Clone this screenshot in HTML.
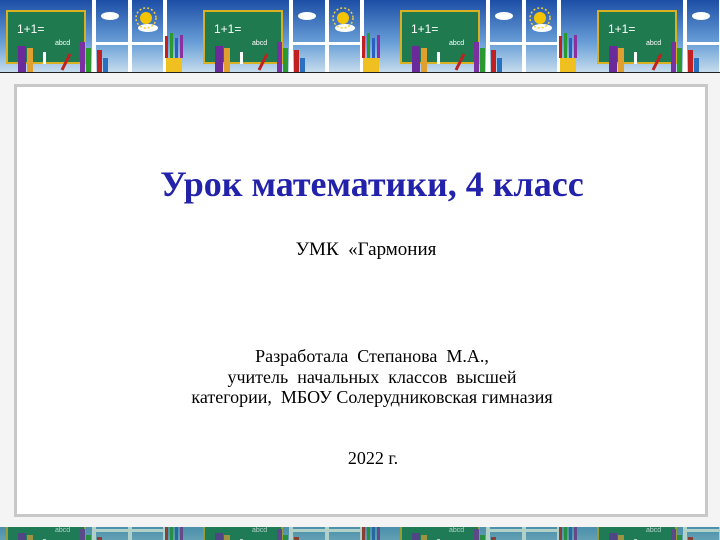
<!DOCTYPE html>
<html><head><meta charset="utf-8"><style>
body{margin:0;width:720px;height:540px;overflow:hidden;background:#fff;font-family:"Liberation Serif",serif;position:relative}
svg.band{position:absolute;left:0}
#outer{position:absolute;left:0;top:72px;width:720px;height:455px;background:#f4f4f4;border-top:1px solid #222}
#panel{position:absolute;left:14px;top:84px;width:688px;height:427px;background:#fff;border:3px solid #c8c8c8;box-sizing:content-box}
.t{position:absolute;left:0;width:720px;text-align:center;color:#000;white-space:pre}
</style></head><body>
<svg class="band" style="top:0" width="720" height="72" viewBox="0 0 720 72">
<defs>
<linearGradient id="sky" x1="0" y1="0" x2="0" y2="1"><stop offset="0" stop-color="#1c4ea6"/><stop offset="0.6" stop-color="#6aa0d8"/><stop offset="1" stop-color="#c6dced"/></linearGradient>
<pattern id="tile" width="197" height="72" patternUnits="userSpaceOnUse" x="0">
<rect width="197" height="72" fill="url(#sky)"/>
<rect x="92" y="0" width="4" height="72" fill="#fff"/><rect x="128" y="0" width="4" height="72" fill="#fff"/><rect x="163" y="0" width="4" height="72" fill="#fff"/>
<rect x="92" y="42" width="75" height="3" fill="#fff"/>
<ellipse cx="110" cy="16" rx="9" ry="4" fill="#fff"/><ellipse cx="148" cy="28" rx="10" ry="4" fill="#fff"/>
<circle cx="146" cy="18" r="6" fill="#f5c400"/><circle cx="146" cy="18" r="10" fill="none" stroke="#f5d030" stroke-width="1.5" stroke-dasharray="2 2"/>
<rect x="6" y="10" width="80" height="54" fill="#d8b020"/><rect x="8" y="12" width="76" height="50" fill="#1f7a50"/>
<text x="17" y="33" font-size="12" fill="#fff" font-family="Liberation Sans">1+1=</text>
<text x="55" y="45" font-size="7" fill="#fff" font-family="Liberation Sans">abcd</text>
<rect x="18" y="46" width="8" height="26" fill="#6a2a9a"/><rect x="27" y="48" width="6" height="24" fill="#e0a030"/><rect x="43" y="52" width="3" height="12" fill="#fff"/>
<rect x="80" y="42" width="5" height="30" fill="#7a30a0"/><rect x="86" y="48" width="5" height="24" fill="#2a9a30"/><rect x="97" y="50" width="5" height="22" fill="#c02020"/><rect x="103" y="58" width="5" height="14" fill="#2a70c0"/>
<line x1="62" y1="70" x2="70" y2="54" stroke="#c02020" stroke-width="3"/>
<rect x="166" y="58" width="16" height="14" fill="#f0c020"/>
<rect x="165" y="36" width="3" height="22" fill="#c02020"/><rect x="170" y="33" width="3" height="25" fill="#2a9a30"/><rect x="175" y="38" width="3" height="20" fill="#2a60c0"/><rect x="180" y="35" width="3" height="23" fill="#8a30a0"/>
</pattern></defs>
<rect width="720" height="72" fill="url(#tile)"/>
</svg>
<div id="outer"></div>
<div id="panel"></div>
<svg class="band" style="top:527px" width="720" height="13" viewBox="0 0 720 13">
<g transform="translate(0,-40)"><rect y="40" width="720" height="13" fill="url(#tile)"/></g>
<rect width="720" height="13" fill="#1f7a60" opacity="0.35"/>
</svg>
<div class="t" style="top:163px;font-size:36px;font-weight:bold;color:#2222aa;left:12px">Урок математики, 4 класс</div>
<div class="t" style="top:239px;font-size:19px;left:6px">УМК  «Гармония</div>
<div class="t" style="top:346px;font-size:18px;line-height:20.5px;left:12px">Разработала  Степанова  М.А.,
учитель  начальных  классов  высшей
категории,  МБОУ Солерудниковская гимназия</div>
<div class="t" style="top:448px;font-size:18px;left:13px">2022 г.</div>
</body></html>
